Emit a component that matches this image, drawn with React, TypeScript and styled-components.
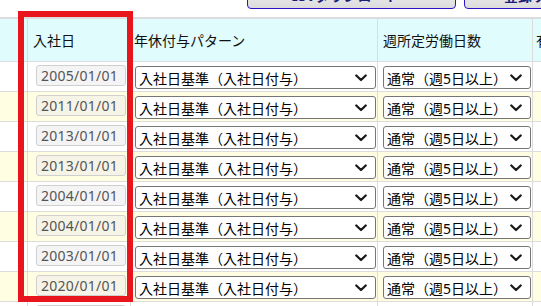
import React from "react";
import styled, { createGlobalStyle } from "styled-components";

const GlobalStyle = createGlobalStyle`
  html, body { margin: 0; padding: 0; background: #ffffff; overflow: hidden; }
  body { font-family: "Noto Sans", "Noto Sans CJK JP", sans-serif; }
`;

const Page = styled.div`
  position: relative;
  width: 541px;
  height: 306px;
  overflow: hidden;
`;

const Toolbar = styled.div`
  height: 17px;
  box-sizing: border-box;
  display: flex;
  align-items: flex-end;
  gap: 8px;
  padding: 0 0 8px 247px;
  overflow: hidden;
`;

const ToolButton = styled.div<{ $w: number }>`
  flex: none;
  width: ${(p) => p.$w}px;
  height: 30px;
  box-sizing: border-box;
  border: 1px solid #2a14c4;
  border-radius: 4px;
  background: linear-gradient(#f8f8f8, #dcdcdc);
  color: #1c1c7a;
  font-size: 14px;
  font-weight: bold;
  display: flex;
  align-items: center;
  justify-content: center;
  padding-right: 14px;
  padding-top: 2px;
`;

const Divider = styled.div`
  height: 2px;
  background: #dcdcdc;
`;

const Grid = styled.div`
  width: 640px;
`;

const Row = styled.div<{ $bg: string; $h: number }>`
  display: grid;
  grid-template-columns: 28px 103px 247px 155px 107px;
  height: ${(p) => p.$h}px;
  box-sizing: border-box;
  background: ${(p) => p.$bg};
  border-bottom: 1px solid #dcdcdc;
`;

const HeadCell = styled.div<{ $pl?: number }>`
  border-right: 1px solid #dcdcdc;
  display: flex;
  align-items: center;
  padding-left: ${(p) => p.$pl ?? 5}px;
  font-family: "Noto Sans CJK JP", sans-serif;
  font-size: 14px;
  color: #111;
  white-space: nowrap;
  overflow: hidden;
`;

const Cell = styled.div<{ $pl?: number; $pt?: number }>`
  border-right: 1px solid #dcdcdc;
  padding-left: ${(p) => p.$pl ?? 5}px;
  padding-top: ${(p) => p.$pt ?? 3}px;
  overflow: hidden;
`;

const DateField = styled.div<{ $bg: string }>`
  width: 90px;
  height: 21px;
  box-sizing: border-box;
  border: 1px solid #cfcfcf;
  border-radius: 3px;
  background: ${(p) => p.$bg};
  color: #555;
  font-family: "Noto Sans", sans-serif;
  font-size: 14px;
  line-height: 19px;
  letter-spacing: 0.25px;
  padding-left: 4px;
`;

const SelectBox = styled.div<{ $w: number }>`
  width: ${(p) => p.$w}px;
  height: 23px;
  box-sizing: border-box;
  border: 1px solid #767676;
  border-radius: 3px;
  background: #fff;
  display: flex;
  align-items: center;
  justify-content: space-between;
  padding: 0 8px 0 3px;
  font-family: "Noto Sans", "Noto Sans CJK JP", sans-serif;
  font-size: 14px;
  color: #000;
  white-space: nowrap;
`;

const Chevron = () => (
  <svg width="12" height="8" viewBox="0 0 12 8">
    <path d="M1.3 1.5 L6 6 L10.7 1.5" fill="none" stroke="#1a1a1a" strokeWidth="2.3" strokeLinecap="round" strokeLinejoin="round" />
  </svg>
);

const Highlight = styled.div`
  position: absolute;
  left: 18px;
  top: 11px;
  width: 115px;
  height: 291px;
  box-sizing: border-box;
  border: 6px solid #e8151c;
  pointer-events: none;
`;

const dates = [
  "2005/01/01",
  "2011/01/01",
  "2013/01/01",
  "2013/01/01",
  "2004/01/01",
  "2004/01/01",
  "2003/01/01",
  "2020/01/01",
  "2019/01/01",
];

export default function App() {
  return (
    <Page>
      <GlobalStyle />
      <Toolbar>
        <ToolButton $w={209}>CSVダウンロード</ToolButton>
        <ToolButton $w={150}>登録する</ToolButton>
      </Toolbar>
      <Divider />
      <Grid>
        <Row $bg="#e0fcfc" $h={43}>
          <HeadCell />
          <HeadCell>入社日</HeadCell>
          <HeadCell $pl={3}>年休付与パターン</HeadCell>
          <HeadCell>週所定労働日数</HeadCell>
          <HeadCell $pl={3}>有効期限</HeadCell>
        </Row>
        {dates.map((d, i) => {
          const odd = i % 2 === 1;
          return (
            <Row key={i} $bg={odd ? "#fffde2" : "#ffffff"} $h={30}>
              <Cell />
              <Cell $pl={8}>
                <DateField $bg={odd ? "#f5f4e6" : "#f4f4f4"}>{d}</DateField>
              </Cell>
              <Cell $pl={4} $pt={4}>
                <SelectBox $w={241}>
                  <span>入社日基準（入社日付与）</span>
                  <Chevron />
                </SelectBox>
              </Cell>
              <Cell $pl={5} $pt={4}>
                <SelectBox $w={148}>
                  <span>通常（週5日以上）</span>
                  <Chevron />
                </SelectBox>
              </Cell>
              <Cell />
            </Row>
          );
        })}
      </Grid>
      <Highlight />
    </Page>
  );
}
